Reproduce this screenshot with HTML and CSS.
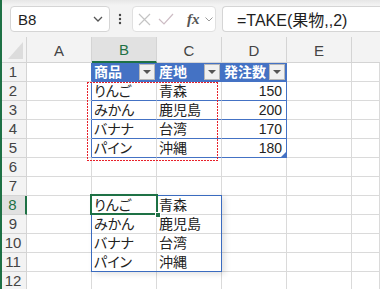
FILE: index.html
```html
<!DOCTYPE html>
<html lang="ja">
<head>
  <meta charset="UTF-8">
  <title>TAKE</title>
  <link rel="stylesheet" href="styles.css">
</head>
<body>
  <div class="toolbar">
    <div class="namebox">
      <span>B8</span>
      <svg width="10" height="6" viewBox="0 0 10 6"><path d="M1 1 L5 5 L9 1" fill="none" stroke="#555" stroke-width="1.3"/></svg>
    </div>
    <svg class="dots" width="4" height="12" viewBox="0 0 4 12"><circle cx="2" cy="2" r="1.2" fill="#444"/><circle cx="2" cy="6" r="1.2" fill="#444"/><circle cx="2" cy="10" r="1.2" fill="#444"/></svg>
    <div class="fxbox">
      <svg width="13" height="13" viewBox="0 0 13 13"><path d="M1 1 L12 12 M12 1 L1 12" stroke="#c4c4c4" stroke-width="1.2"/></svg>
      <svg width="16" height="12" viewBox="0 0 16 12"><path d="M1 6 L6 11 L15 1" fill="none" stroke="#cdbcc4" stroke-width="1.2"/></svg>
      <span class="fx">fx</span>
      <svg width="8" height="5" viewBox="0 0 8 5"><path d="M0.5 0.5 L4 4 L7.5 0.5" fill="none" stroke="#999" stroke-width="1"/></svg>
    </div>
    <div class="formula">=TAKE(果物,,2)</div>
  </div>

  <div class="sheet">
    <div class="hd corner"></div>
    <div class="hd">A</div>
    <div class="hd sel">B</div>
    <div class="hd">C</div>
    <div class="hd">D</div>
    <div class="hd">E</div>
    <div class="hd last"></div>

    <div class="rn">1</div>
    <div class="c tedge"></div>
    <div class="c th">商品<span class="filter"></span></div>
    <div class="c th">産地<span class="filter"></span></div>
    <div class="c th tend">発注数<span class="filter"></span></div>
    <div class="c"></div>
    <div class="c"></div>

    <div class="rn">2</div>
    <div class="c tedge"></div>
    <div class="c tr">りんご</div>
    <div class="c tr">青森</div>
    <div class="c tr tend num">150</div>
    <div class="c"></div>
    <div class="c"></div>

    <div class="rn">3</div>
    <div class="c tedge"></div>
    <div class="c tr">みかん</div>
    <div class="c tr">鹿児島</div>
    <div class="c tr tend num">200</div>
    <div class="c"></div>
    <div class="c"></div>

    <div class="rn">4</div>
    <div class="c tedge"></div>
    <div class="c tr">バナナ</div>
    <div class="c tr">台湾</div>
    <div class="c tr tend num">170</div>
    <div class="c"></div>
    <div class="c"></div>

    <div class="rn">5</div>
    <div class="c tedge"></div>
    <div class="c tr">パイン</div>
    <div class="c tr">沖縄</div>
    <div class="c tr tend num handle">180</div>
    <div class="c"></div>
    <div class="c"></div>

    <div class="rn">6</div>
    <div class="c"></div><div class="c"></div><div class="c"></div><div class="c"></div><div class="c"></div><div class="c"></div>

    <div class="rn">7</div>
    <div class="c"></div><div class="c"></div><div class="c"></div><div class="c"></div><div class="c"></div><div class="c"></div>

    <div class="rn sel">8</div>
    <div class="c"></div>
    <div class="c">りんご</div>
    <div class="c">青森</div>
    <div class="c"></div><div class="c"></div><div class="c"></div>

    <div class="rn">9</div>
    <div class="c"></div>
    <div class="c">みかん</div>
    <div class="c">鹿児島</div>
    <div class="c"></div><div class="c"></div><div class="c"></div>

    <div class="rn">10</div>
    <div class="c"></div>
    <div class="c">バナナ</div>
    <div class="c">台湾</div>
    <div class="c"></div><div class="c"></div><div class="c"></div>

    <div class="rn">11</div>
    <div class="c"></div>
    <div class="c">パイン</div>
    <div class="c">沖縄</div>
    <div class="c"></div><div class="c"></div><div class="c"></div>

    <div class="rn">12</div>
    <div class="c"></div><div class="c"></div><div class="c"></div><div class="c"></div><div class="c"></div><div class="c"></div>

    <!-- overlays -->
    <div class="ref-range"></div>
    <div class="spill"></div>
    <div class="cursor"><span class="fill-handle"></span></div>
  </div>
</body>
</html>
```

FILE: styles.css
```css
* {
  box-sizing: border-box;
}
html, body {
  margin: 0;
  height: 100%;
  overflow: hidden;
}
body {
  position: relative;
  background: #fff;
  font-family: "Liberation Sans", "Noto Sans CJK JP", sans-serif;
  color: #222;
}
body::before {
  content: "";
  position: absolute;
  left: 0;
  top: 0;
  bottom: 0;
  width: 2px;
  background: #1e7145;
  z-index: 5;
}

/* formula bar */
.toolbar {
  height: 37px;
  background: linear-gradient(#e6e6e6, #f3f3f3 5px);
  display: flex;
  align-items: center;
  padding: 1px 0 0 10px;
}
.namebox {
  width: 100px;
  height: 26px;
  background: #fff;
  border: 1px solid #d5d5d5;
  border-radius: 4px;
  display: flex;
  align-items: center;
  justify-content: space-between;
  padding: 0 6px 0 7px;
  font-size: 15px;
  color: #1e1e1e;
}
.dots {
  margin: 0 10px 0 8px;
}
.fxbox {
  width: 84px;
  height: 26px;
  background: #fff;
  border: 1px solid #e0e0e0;
  border-radius: 4px;
  display: flex;
  align-items: center;
  gap: 7px;
  padding: 0 0 0 5px;
}
.fx {
  font-family: "Liberation Serif", serif;
  font-style: italic;
  font-weight: bold;
  font-size: 15px;
  color: #555;
  margin-left: 6px;
  margin-right: -2px;
}
.formula {
  flex: 1;
  height: 26px;
  margin-left: 6px;
  background: #fff;
  border: 1px solid #d5d5d5;
  border-right: none;
  border-radius: 4px 0 0 4px;
  display: flex;
  align-items: center;
  padding-left: 14px;
  font-size: 16px;
  color: #1e1e1e;
}

/* grid */
.sheet {
  position: relative;
  display: grid;
  grid-template-columns: 27px 65px 65px 65px 65px 65px 1fr;
  grid-template-rows: 26px repeat(12, 19px);
  font-size: 14px;
  font-feature-settings: "palt";
}
.hd, .rn, .c {
  border-right: 1px solid #dadada;
  border-bottom: 1px solid #dadada;
  white-space: nowrap;
  overflow: hidden;
}
.hd {
  background: #f3f3f3;
  border-color: #d4d4d4;
  display: flex;
  align-items: center;
  justify-content: center;
  font-size: 15px;
  color: #444;
  padding-top: 1px;
}
.hd.last {
  border-right: none;
}
.corner {
  position: relative;
}
.corner::after {
  content: "";
  position: absolute;
  right: 3px;
  bottom: 3px;
  border-style: solid;
  border-width: 0 0 17px 15px;
  border-color: transparent transparent #dcdcdc transparent;
}
.hd.sel {
  background: #e1e1e1;
  color: #1e7145;
  border-bottom: 2px solid #1e7145;
}
.rn {
  background: #f3f3f3;
  border-color: #d4d4d4;
  text-align: center;
  font-size: 15px;
  line-height: 18px;
  color: #444;
}
.rn.sel {
  background: #e1e1e1;
  color: #1e7145;
  border-right: 2px solid #1e7145;
}
.c {
  padding: 0 2px;
  line-height: 19px;
}
.num {
  text-align: right;
  padding-right: 4px;
}

/* table */
.tedge {
  border-right-color: #4472c4;
}
.th {
  background: #4472c4;
  border-color: #4472c4;
  color: #fff;
  font-weight: bold;
  display: flex;
  align-items: center;
  justify-content: space-between;
  padding-right: 1px;
}
.filter {
  width: 16px;
  height: 16px;
  background: #f0f0f0;
  border: 1px solid #b8b8b8;
  position: relative;
}
.filter::after {
  content: "";
  position: absolute;
  left: 3px;
  top: 5px;
  border-style: solid;
  border-width: 4px 4px 0 4px;
  border-color: #555 transparent transparent transparent;
}
.tr {
  border-bottom-color: #4472c4;
}
.tend {
  border-right-color: #4472c4;
}
.handle {
  position: relative;
}
.handle::after {
  content: "";
  position: absolute;
  right: 0;
  bottom: 0;
  border-style: solid;
  border-width: 0 0 5px 5px;
  border-color: transparent transparent #4472c4 transparent;
}

/* overlays */
.ref-range {
  position: absolute;
  left: 87px;
  top: 45px;
  width: 131px;
  height: 79px;
  background:
    repeating-linear-gradient(90deg, #e8202a 0 2px, transparent 2px 3px) left top / 100% 1px no-repeat,
    repeating-linear-gradient(90deg, #e8202a 0 2px, transparent 2px 3px) left bottom / 100% 1px no-repeat,
    repeating-linear-gradient(180deg, #e8202a 0 2px, transparent 2px 3px) left top / 1px 100% no-repeat,
    repeating-linear-gradient(180deg, #e8202a 0 2px, transparent 2px 3px) right top / 1px 100% no-repeat;
}
.spill {
  position: absolute;
  left: 91px;
  top: 158px;
  width: 131px;
  height: 77px;
  border: 1px solid #3a6bbf;
  box-shadow: 3px 2px 6px rgba(0, 0, 0, 0.12);
}
.cursor {
  position: absolute;
  left: 90px;
  top: 157px;
  width: 68px;
  height: 21px;
  border: 2px solid #1e7145;
}
.fill-handle {
  position: absolute;
  right: -5px;
  bottom: -5px;
  width: 6px;
  height: 6px;
  background: #1e7145;
  border: 1px solid #fff;
}
```
